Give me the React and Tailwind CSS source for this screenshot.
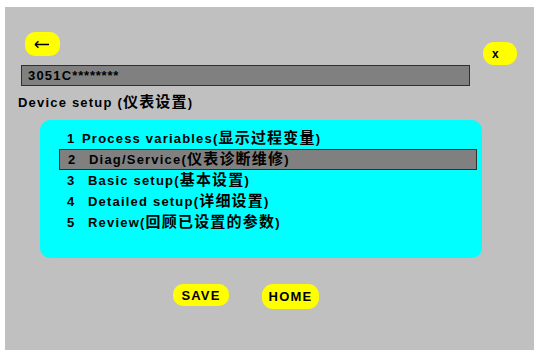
const font = { fontFamily: '"Liberation Sans", "Noto Sans CJK SC", sans-serif' }

const items = [
  { n: '1', en: 'Process variables', zh: '显示过程变量', w: 'w-[15px]' },
  { n: '2', en: 'Diag/Service', zh: '仪表诊断维修', w: 'w-[21px]', active: true },
  { n: '3', en: 'Basic setup', zh: '基本设置', w: 'w-[21px]' },
  { n: '4', en: 'Detailed setup', zh: '详细设置', w: 'w-[21px]' },
  { n: '5', en: 'Review', zh: '回顾已设置的参数', w: 'w-[21px]' },
]

export default function App() {
  return (
    <div className="w-[543px] h-[354px] bg-white pt-[7px] pl-[5px] overflow-hidden" style={font}>
      <div className="w-[529px] h-[343px] bg-[#c0c0c0] pt-[25px] text-black font-bold text-[13px] tracking-[1.2px]">
        {/* top buttons */}
        <div className="flex items-start justify-between pl-[20px] pr-[17px]">
          <button className="w-[35px] h-[24px] rounded-[10px] bg-[#ffff00] flex items-center justify-center">
            <svg width="16" height="9" viewBox="0 0 16 9" className="-ml-[2px]">
              <path d="M1 4.5H15M1 4.5L4.5 1.2M1 4.5L4.5 7.8" stroke="#000" strokeWidth="1.3" fill="none" />
            </svg>
          </button>
          <button className="mt-[10px] w-[34px] h-[23px] rounded-[11px] bg-[#ffff00] text-[12px] leading-none pl-[9px] text-left">x</button>
        </div>

        <div className="ml-[16px] w-[449px] h-[21px] border border-[#303030] bg-[#808080] pl-[6px] leading-[19px]">
          3051C<span className="tracking-[0.8px]">********</span>
        </div>

        <div className="ml-[13px] mt-[7px] leading-[18px]">
          Device setup (<span className="text-[15px]">仪表设置</span>)
        </div>

        {/* menu */}
        <div className="ml-[35px] mt-[8px] w-[442px] h-[138px] rounded-[10px] bg-[#00ffff] pt-[8px] pl-[19px] pr-[5px]">
          {items.map(it => (
            <div
              key={it.n}
              className={`flex items-center h-[21px] pl-[8px] ${it.active ? 'bg-[#808080] border border-[#303030] pl-[7px]' : ''}`}
            >
              <span className={`${it.w} shrink-0`}>{it.n}</span>
              <span>{it.en}(<span className="text-[15px]">{it.zh}</span>)</span>
            </div>
          ))}
        </div>

        {/* bottom buttons */}
        <div className="flex items-start mt-[26px] pl-[168px] gap-[33px]">
          <button className="w-[56px] h-[22px] rounded-[10px] bg-[#ffff00] leading-none">SAVE</button>
          <button className="w-[57px] h-[25px] rounded-[11px] bg-[#ffff00] leading-none">HOME</button>
        </div>
      </div>
    </div>
  )
}
